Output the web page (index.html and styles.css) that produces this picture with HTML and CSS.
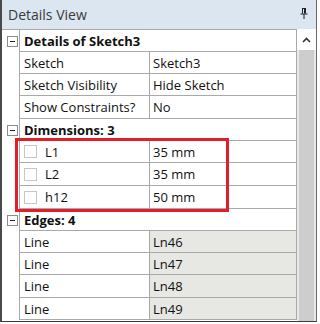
FILE: index.html
```html
<!DOCTYPE html>
<html lang="en">
<head>
    <meta charset="UTF-8">
    <title>Details View</title>
    <link rel="stylesheet" href="styles.css">
</head>
<body>

    <div class="panel">
        <div class="titlebar">
            <span>Details View</span>
            <svg class="pin" width="8" height="11" viewBox="0 0 8 11">
                <path d="M2 0.5h4M2.5 0.5v5M5.5 0.5v5M4.5 0.5v5M0.5 6h7M4 6v5" stroke="#222" stroke-width="1" fill="none"/>
            </svg>
        </div>

        <div class="content">
            <div class="grid">
                <div class="row group">
                    <div class="gutter"><span class="toggle"></span></div>
                    <div class="cell span">Details of Sketch3</div>
                </div>
                <div class="row">
                    <div class="gutter"></div>
                    <div class="cell label">Sketch</div>
                    <div class="cell value">Sketch3</div>
                </div>
                <div class="row">
                    <div class="gutter"></div>
                    <div class="cell label">Sketch Visibility</div>
                    <div class="cell value">Hide Sketch</div>
                </div>
                <div class="row tall">
                    <div class="gutter"></div>
                    <div class="cell label">Show Constraints?</div>
                    <div class="cell value">No</div>
                </div>
                <div class="row group">
                    <div class="gutter"><span class="toggle"></span></div>
                    <div class="cell span">Dimensions: 3</div>
                </div>
                <div class="row">
                    <div class="gutter"></div>
                    <div class="cell label"><span class="check"></span>L1</div>
                    <div class="cell value">35 mm</div>
                </div>
                <div class="row tall">
                    <div class="gutter"></div>
                    <div class="cell label"><span class="check"></span>L2</div>
                    <div class="cell value">35 mm</div>
                </div>
                <div class="row tall">
                    <div class="gutter"></div>
                    <div class="cell label"><span class="check"></span>h12</div>
                    <div class="cell value">50 mm</div>
                </div>
                <div class="row group">
                    <div class="gutter"><span class="toggle"></span></div>
                    <div class="cell span">Edges: 4</div>
                </div>
                <div class="row">
                    <div class="gutter"></div>
                    <div class="cell label">Line</div>
                    <div class="cell value readonly">Ln46</div>
                </div>
                <div class="row">
                    <div class="gutter"></div>
                    <div class="cell label">Line</div>
                    <div class="cell value readonly">Ln47</div>
                </div>
                <div class="row tall">
                    <div class="gutter"></div>
                    <div class="cell label">Line</div>
                    <div class="cell value readonly">Ln48</div>
                </div>
                <div class="row">
                    <div class="gutter"></div>
                    <div class="cell label">Line</div>
                    <div class="cell value readonly">Ln49</div>
                </div>

                <div class="highlight"></div>
            </div>

            <div class="scrollbar">
                <div class="arrow">
                    <svg width="9" height="6" viewBox="0 0 9 6">
                        <path d="M1 5l3.5-3.5L8 5" stroke="#333" stroke-width="1.6" fill="none"/>
                    </svg>
                </div>
                <div class="track"><div class="thumb"></div></div>
            </div>
        </div>
    </div>

</body>
</html>
```

FILE: styles.css
```css
body {
    margin: 0;
    font-family: 'Open Sans', sans-serif;
    font-size: 13px;
    color: #111;
    background-color: #fff;
}

.panel {
    width: 314px;
    height: 321px;
    border-left: 2px solid #4a4a4a;
    border-right: 1px solid #6a6a6a;
    border-bottom: 1px solid #3a3a3a;
    display: flex;
    flex-direction: column;
}

.titlebar {
    height: 29px;
    background-color: #dbe6f1;
    display: flex;
    align-items: center;
    justify-content: space-between;
    padding: 0 8px 0 6px;
    font-size: 14px;
    color: #3a3a3a;
    box-sizing: border-box;
}

.pin {
    margin-top: -2px;
}

.content {
    flex: 1;
    display: flex;
}

.grid {
    position: relative;
    width: 295px;
    border-top: 1px solid #a9a9a9;
}

.row {
    display: flex;
    height: 22px;
}

.row.tall {
    height: 23px;
}

.gutter {
    width: 17px;
    border-right: 1px solid #a9a9a9;
    display: flex;
    align-items: center;
    justify-content: center;
}

.toggle {
    width: 9px;
    height: 9px;
    border: 1px solid #8c8c8c;
    position: relative;
    margin-left: 4px;
}

.toggle::after {
    content: '';
    position: absolute;
    left: 2px;
    top: 4px;
    width: 5px;
    height: 1px;
    background-color: #222;
}

.cell {
    border-bottom: 1px solid #a9a9a9;
    display: flex;
    align-items: center;
    white-space: nowrap;
}

.span {
    flex: 1;
    padding-left: 4px;
    font-weight: bold;
    border-right: 1px solid #a9a9a9;
}

.label {
    width: 125px;
    padding-left: 4px;
    border-right: 1px solid #a9a9a9;
}

.value {
    flex: 1;
    padding-left: 3px;
    border-right: 1px solid #a9a9a9;
}

.readonly {
    background-color: #e7e7e3;
}

.check {
    width: 11px;
    height: 11px;
    border: 1px solid #c6c6c6;
    margin: 0 8px 0 0;
}

.highlight {
    position: absolute;
    left: 13px;
    top: 108px;
    width: 208px;
    height: 68px;
    border: 3px solid #e31e2a;
}

.scrollbar {
    flex: 1;
    display: flex;
    flex-direction: column;
}

.arrow {
    height: 21px;
    display: flex;
    align-items: center;
    justify-content: center;
    background-color: #fff;
}

.track {
    flex: 1;
    background-color: #e9e9e9;
    padding: 0 2px;
    display: flex;
}

.thumb {
    flex: 1;
    background-color: #cdcdcd;
}
```
